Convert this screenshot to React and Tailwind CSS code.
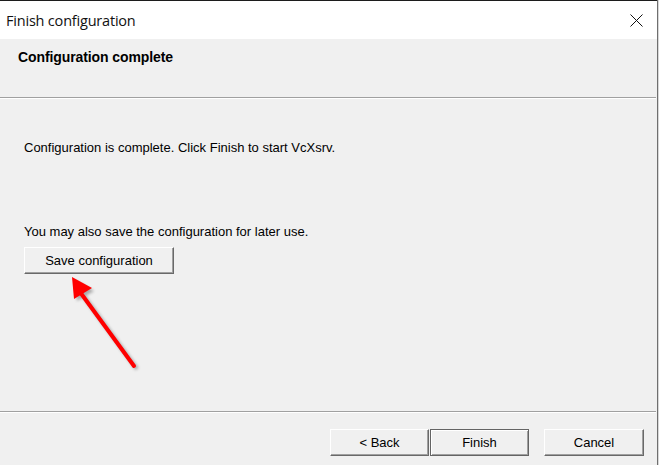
import React from "react";

const sans = { fontFamily: '"Liberation Sans", Arial, sans-serif' };

function WinButton({ children, isDefault = false, className = "" }) {
  const bevel = isDefault
    ? "border border-[#646464] shadow-[inset_1px_1px_#ffffff,inset_-1px_-1px_#a0a0a0]"
    : "border-t border-l border-t-white border-l-white border-b border-r border-b-[#696969] border-r-[#696969] shadow-[inset_-1px_-1px_#a0a0a0]";
  return (
    <button
      className={`h-[27px] bg-[#f0f0f0] text-[13px] text-black flex items-center justify-center ${bevel} ${className}`}
      style={sans}
    >
      {children}
    </button>
  );
}

function Separator() {
  return (
    <div className="flex flex-col w-[656px]">
      <div className="h-px bg-[#a0a0a0]" />
      <div className="h-px bg-white" />
    </div>
  );
}

export default function App() {
  return (
    <div className="w-[659px] h-[465px] bg-[#f0f0f0] flex overflow-hidden">
      <div className="w-[657px] flex flex-col">
        <div className="h-px bg-[#1c1c1c]" />
        {/* title bar */}
        <div className="h-[38px] bg-white flex items-center justify-between pl-[6px] pr-[14px]">
          <span className="text-[14.5px] text-[#111] tracking-[-0.2px] mt-[1px]" style={{ fontFamily: '"Open Sans", "Liberation Sans", sans-serif' }}>
            Finish configuration
          </span>
          <svg width="13" height="13" viewBox="0 0 13 13">
            <path d="M0.5 0.5 L12.5 12.5 M12.5 0.5 L0.5 12.5" stroke="#111" strokeWidth="1" fill="none" />
          </svg>
        </div>
        {/* header */}
        <div className="h-[58px] pl-[18px] pt-[10px]">
          <div className="text-[14px] leading-[17px] font-bold text-black tracking-[-0.1px]" style={sans}>
            Configuration complete
          </div>
        </div>
        <Separator />
        {/* body */}
        <div className="relative flex-1 pl-[24px] pt-[41px] text-[13px] text-black" style={sans}>
          <div className="leading-[15px]">Configuration is complete. Click Finish to start VcXsrv.</div>
          <div className="leading-[15px] mt-[69px]">You may also save the configuration for later use.</div>
          <WinButton className="w-[150px] mt-[8px]">Save configuration</WinButton>
          <svg className="absolute left-0 top-0 pointer-events-none" width="200" height="312" viewBox="0 99 200 312">
            <defs>
              <filter id="sh" x="-20%" y="-20%" width="150%" height="150%">
                <feGaussianBlur stdDeviation="1.5" />
              </filter>
            </defs>
            <g transform="translate(3 3)" opacity="0.45" filter="url(#sh)">
              <line x1="134" y1="366" x2="80" y2="292" stroke="#555" strokeWidth="4" />
              <polygon points="72,277 74,298 91,288" fill="#555" />
            </g>
            <line x1="134" y1="366" x2="80" y2="292" stroke="#ff0000" strokeWidth="4" strokeLinecap="round" />
            <polygon points="72,277 74,299 92,288" fill="#ff0000" />
          </svg>
        </div>
        <Separator />
        {/* footer */}
        <div className="h-[52px] flex items-start pt-[16px] pl-[330px]">
          <WinButton className="w-[99px]">&lt; Back</WinButton>
          <WinButton isDefault className="w-[99px] ml-[1px]">Finish</WinButton>
          <WinButton className="w-[100px] ml-[15px]">Cancel</WinButton>
        </div>
      </div>
      <div className="w-px bg-[#6f6f6f]" />
      <div className="w-px bg-[#d8d8d8]" />
    </div>
  );
}
